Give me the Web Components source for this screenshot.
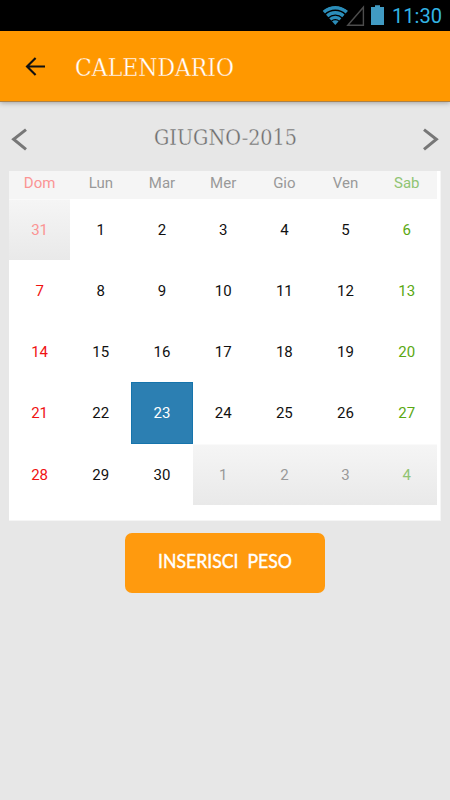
<!DOCTYPE html>
<html lang="it">
<head>
<meta charset="utf-8">
<title>Calendario</title>
<style>
html,body{margin:0;height:100%}
body{background:#e7e7e7;font-family:Roboto,"Liberation Sans",sans-serif;overflow:hidden}
</style>
</head>
<body>
<calendar-app></calendar-app>
<script>
function define(name, html, setup){
  customElements.define(name, class extends HTMLElement{
    connectedCallback(){
      if(this.shadowRoot) return;
      this.attachShadow({mode:'open'}).innerHTML = html;
      if(setup) setup.call(this, this.shadowRoot);
    }
  });
}

/* A single line of text fitted to a given width. Attributes: w, h, size, base, font, weight, edge, edge-by. */
define('fit-text', `<style>:host{display:block}svg{display:block;overflow:visible}</style>`, function(root){
  const a = n => this.getAttribute(n);
  const ns = 'http://www.w3.org/2000/svg';
  const svg = document.createElementNS(ns,'svg');
  svg.setAttribute('width', a('w')); svg.setAttribute('height', a('h'));
  const t = document.createElementNS(ns,'text');
  t.setAttribute('x', 0); t.setAttribute('y', a('base'));
  t.setAttribute('textLength', a('w')); t.setAttribute('lengthAdjust','spacingAndGlyphs');
  t.setAttribute('style', `font:${a('weight')||400} ${a('size')}px ${a('font')};fill:currentColor;white-space:pre;` +
    (a('edge') ? `stroke:${a('edge')};stroke-width:${a('edge-by')}` : ''));
  t.textContent = this.textContent;
  svg.append(t); root.append(svg);
});

define('status-bar', `<style>
:host{display:flex;justify-content:flex-end;align-items:flex-start;height:31px;background:#000;box-sizing:border-box;padding-right:8px}
svg{display:block;flex:none}
fit-text{color:#33b5e5}
</style>
<svg width="70" height="31" viewBox="322 0 70 31">
 <clipPath id="fan"><path d="M335.3 25 L322.3 10.6 Q335.3 .8 348.3 10.6Z"/></clipPath>
 <g clip-path="url(#fan)" fill="none" stroke="#2b8db9">
  <circle cx="335.3" cy="25" r="17.2" stroke-width="3.6"/>
  <circle cx="335.3" cy="25" r="12.2" stroke-width="3.4"/>
  <circle cx="335.3" cy="25" r="7.6" stroke-width="3.2"/>
  <circle cx="335.3" cy="25" r="2.4" stroke-width="4.8"/>
 </g>
 <path d="M347.8 25.2 L363.4 7.2 V25.2Z" fill="none" stroke="#4c4c4c" stroke-width="1.4"/>
 <path d="M371 7H375V5.2H380V7H384V25H371Z" fill="#419bc3"/>
</svg>
<fit-text w="50" h="31" base="23.4" size="20.5" font="Roboto,sans-serif">11:30</fit-text>`);

define('app-bar', `<style>
:host{display:flex;align-items:flex-start;height:70px;background:#ff9800;border-bottom:1px solid #ad8147;box-shadow:0 1px 5px rgba(0,0,0,.3);position:relative;color:#fff}
svg{display:block;flex:none;margin:26px 29px 0 25px}
fit-text{margin-top:20px}
</style>
<svg width="21" height="20" viewBox="0 0 21 20" fill="none" stroke="#111" stroke-width="2.1"><path d="M20 9.5H2M10.6 1L2 9.5L10.6 18"/></svg>
<fit-text w="159" h="32" base="24.7" size="25" font="'Roboto Slab','DejaVu Serif',serif" weight="300" edge="#ff9800" edge-by=".35">CALENDARIO</fit-text>`);

define('month-nav', `<style>
:host{display:flex;justify-content:space-between;align-items:flex-start;height:69px;padding:0 11px;box-sizing:border-box;color:#6c6c6c}
svg{display:block;margin-top:26px;flex:none}
fit-text{margin-top:20px}
</style>
<svg width="17" height="25" viewBox="0 0 17 25" fill="none" stroke="#777" stroke-width="3"><path d="M15 1.6L2.6 11.2L15 21.4"/></svg>
<fit-text w="143" h="32" base="23.3" size="22.8" font="'Roboto Slab','DejaVu Serif',serif" weight="300" edge="#e7e7e7" edge-by=".35">GIUGNO-2015</fit-text>
<svg width="17" height="25" viewBox="0 0 17 25" fill="none" stroke="#777" stroke-width="3"><path d="M2 1.6L14.4 11.2L2 21.4"/></svg>`);

define('week-day', `<style>
:host{display:flex;justify-content:center;align-items:center;height:28px;padding-bottom:5px;box-sizing:border-box;font-size:15px;color:#999}
:host([kind=sun]){color:#fb9494}
:host([kind=sat]){color:#90c473}
</style><slot></slot>`);

define('day-cell', `<style>
:host{display:flex;justify-content:center;align-items:center;box-sizing:border-box;font-size:15px;color:#111;padding-top:1px}
:host([kind=sun]){color:#f01212}
:host([kind=sat]){color:#5aa812}
:host([out]){background:linear-gradient(#f5f5f5,#e9e9e9);color:#999;border-top:1px solid #fafafa;padding-top:0}
:host([out][kind=sun]){color:#fb9494}
:host([out][kind=sat]){color:#90c473}
:host([selected]){background:#2c7fb2;color:#fff;border:1px solid #1674ac;padding:0}
</style><slot></slot>`);

define('month-grid', `<style>
:host{display:block;margin:0 9px;width:432px;height:350px;box-sizing:border-box;background:#fff;border-right:1px solid #f5f5f5;border-bottom:1px solid #f5f5f5}
.head,.days{display:grid;grid-template-columns:repeat(7,61.2px);width:428.4px}
.head{background:#f5f5f5}
.days{grid-auto-rows:61.15px}
</style><div class="head"></div><div class="days"></div>`, function(root){
  const kind = i => i%7===0 ? 'sun' : i%7===6 ? 'sat' : 'work';
  ['Dom','Lun','Mar','Mer','Gio','Ven','Sab'].forEach((n,i)=>{
    const e = document.createElement('week-day');
    e.setAttribute('kind',kind(i)); e.textContent = n;
    root.querySelector('.head').append(e);
  });
  for(let i=0;i<35;i++){
    const e = document.createElement('day-cell');
    e.setAttribute('kind',kind(i));
    e.textContent = i===0 ? 31 : i>30 ? i-30 : i;
    if(i===0||i>30) e.setAttribute('out','');
    if(i===23) e.setAttribute('selected','');
    root.querySelector('.days').append(e);
  }
});

define('action-button', `<style>
:host{display:flex;justify-content:center;width:200px;height:60px;margin:12px auto 0;border-radius:7px;background:#ff9a0e;color:#fff}
fit-text{margin-top:12px}
</style>
<fit-text w="134" h="30" base="23" size="19" font="Lato,sans-serif" weight="400" edge="#fff" edge-by=".4">INSERISCI  PESO</fit-text>`);

define('calendar-app', `<style>
:host{display:flex;flex-direction:column;width:450px;height:800px;background:#e7e7e7}
status-bar,app-bar,month-nav,month-grid,action-button{flex:none}
</style>
<status-bar></status-bar><app-bar></app-bar><month-nav></month-nav><month-grid></month-grid><action-button></action-button>`);
</script>
</body>
</html>
